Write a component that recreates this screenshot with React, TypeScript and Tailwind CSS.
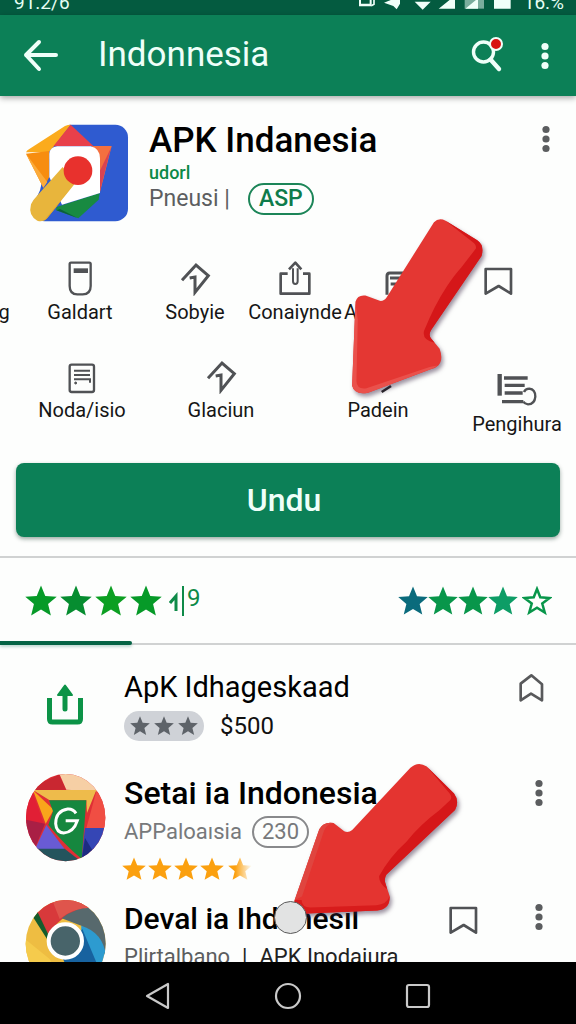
import React from 'react';
import clsx from 'clsx';

const STAR = 'M12 0.4 L15.2 8.2 L23.8 8.8 L17.3 14.3 L19.4 22.8 L12 18.4 L4.6 22.8 L6.7 14.3 L0.2 8.8 L8.8 8.2 Z';

function Star({ className, outline = false }: { className?: string; outline?: boolean }) {
  return (
    <svg viewBox="0 0 24 24" className={clsx('shrink-0', className)} aria-hidden="true">
      {outline ? (
        <path d="M12 2.4 L14.6 9 L22 9.6 L16.2 14 L18.2 21.2 L12 17.4 L5.8 21.2 L7.8 14 L2 9.6 L9.4 9 Z" fill="none" stroke="currentColor" strokeWidth="2" />
      ) : (
        <path d={STAR} fill="currentColor" />
      )}
    </svg>
  );
}

function Dots({ className, label }: { className?: string; label: string }) {
  return (
    <button type="button" aria-label={label} className={clsx('flex w-6 shrink-0 justify-center', className)}>
      <svg width="8" height="28" viewBox="0 0 8 28" fill="currentColor">
        <circle cx="4" cy="4.5" r="3.6" />
        <circle cx="4" cy="14" r="3.6" />
        <circle cx="4" cy="23.5" r="3.6" />
      </svg>
    </button>
  );
}

function BookmarkIcon() {
  return (
    <svg width="33" height="36" viewBox="581 180 99 108" fill="none" stroke="currentColor" strokeWidth="8" strokeLinejoin="round">
      <path d="M592 207 H668 V281 L631 258 L592 281 Z" />
    </svg>
  );
}

function CardIcon() {
  return (
    <svg width="26" height="36" viewBox="205 30 78 108" fill="none" stroke="currentColor" strokeWidth="7">
      <path d="M217 38 H272 Q276 38 276 42 V108 Q276 133 252 133 H236 Q213 133 213 108 V42 Q213 38 217 38 Z" />
      <path d="M225 62 H268" strokeWidth="14" />
    </svg>
  );
}

function TurnIcon() {
  return (
    <svg width="33" height="36" viewBox="534 30 99 108" fill="none" stroke="currentColor" strokeWidth="9">
      <path d="M543 91 L585 45 L622 77 L582 127 V81 L566 84" />
    </svg>
  );
}

function ShareIcon() {
  return (
    <svg width="34" height="36" viewBox="-21 178 102 108" fill="none" stroke="currentColor" strokeWidth="8" strokeLinejoin="round">
      <path d="M8 219 H-13 V279 H73 V219 H54" />
      <path d="M24 203 V242 Q24 250 31 250 Q38 250 38 242 V203" strokeWidth="6" />
      <path d="M12 206 L31 186 L49 206" />
    </svg>
  );
}

function ReportIcon() {
  return (
    <svg width="34" height="26" viewBox="292 222 102 78" fill="none" stroke="currentColor" strokeWidth="9">
      <path d="M301 296 V240 Q301 231 309 231 H350" />
      <path d="M310 246 H340 M312 264 H334" />
    </svg>
  );
}

function NoteIcon() {
  return (
    <svg width="30" height="36" viewBox="200 326 90 108" fill="none" stroke="currentColor" strokeWidth="7">
      <rect x="208" y="346" width="73" height="82" rx="6" />
      <path d="M221 364 H269 M221 377 H269 M221 390 H269 V400" strokeWidth="6" />
      <circle cx="226" cy="401" r="3" fill="currentColor" strokeWidth="3" />
    </svg>
  );
}

function SlashIcon() {
  return (
    <svg width="36" height="36" viewBox="213 474 108 108" fill="none" stroke="#222" strokeWidth="8">
      <path d="M278 576 L306 558" />
    </svg>
  );
}

function ListIcon() {
  return (
    <svg width="42" height="36" viewBox="630 516 126 108" fill="none" stroke="currentColor" strokeWidth="10">
      <path d="M641 522 V587" strokeWidth="13" />
      <path d="M654 534 H725 M656 556 H716 M656 579 H710 M648 605 H712" />
      <path d="M714 576 Q718 566 730 566 Q748 568 748 590 Q746 613 726 613 Q716 612 712 605" strokeWidth="7" />
    </svg>
  );
}

interface ActionProps {
  label: string;
  icon?: React.ReactNode;
  className?: string;
}

function Action({ label, icon, className }: ActionProps) {
  return (
    <button type="button" className={clsx('flex min-w-0 flex-col items-center', className)}>
      <span className="flex h-9 items-end text-[#505255]">{icon}</span>
      <span className="mt-1 h-6 text-[20px] leading-6 whitespace-nowrap text-[#161616]">{label}</span>
    </button>
  );
}

function AppLogo() {
  return (
    <svg width="104" height="100" viewBox="75 38 312 300" className="shrink-0" aria-hidden="true">
      <rect x="96" y="43" width="288" height="290" rx="38" fill="#2f5bd0" />
      <path d="M75 38 H212 L150 110 L120 240 L75 338 Z" fill="#fdfefd" />
      <path d="M78 126 Q80 120 88 116 L195 47 Q204 43 212 43 L162 108 L146 125 Z" fill="#fbab1d" />
      <path d="M78 130 L148 122 V200 L130 232 Z" fill="#f78d10" />
      <path d="M78 130 L142 215 L130 232 Z" fill="#fbab3a" />
      <path d="M212 43 L280 107 L160 108 Z" fill="#e8404a" />
      <path d="M276 107 H335 L300 245 Z" fill="#f4703f" />
      <path d="M333 112 L299 183 V246 Z" fill="#d84352" />
      <path d="M170 290 L299 248 L296 268 L235 324 L168 300 Z" fill="#188a41" />
      <path d="M170 300 L232 323 L180 296 Z" fill="#0c5f3b" />
      <path d="M172 108 H272 Q300 114 300 145 V248 L186 283 L148 200 V130 Q150 110 172 108 Z" fill="#fff" />
      <path d="M188 170 L226 218 L140 325 Q128 336 112 331 Q84 316 93 282 Q98 270 110 258 Z" fill="#e8b53c" />
      <path d="M226 218 L192 258 L166 294 L140 325 L130 333 Z" fill="#dfa52f" />
      <circle cx="234" cy="181" r="43" fill="#e8312d" />
    </svg>
  );
}

function PrismLogo() {
  return (
    <svg width="81" height="89" viewBox="76 40 243 267" aria-hidden="true">
      <clipPath id="prism"><ellipse cx="198" cy="174" rx="119" ry="131" /></clipPath>
      <g clipPath="url(#prism)">
        <rect x="76" y="40" width="243" height="267" fill="#df2f35" />
        <path d="M76 92 L178 45 L200 90 Z" fill="#c92731" />
        <path d="M178 40 H319 V110 L290 95 L200 90 Z" fill="#f6cfa5" />
        <path d="M100 91 H290 L262 160 L260 122 H150 Z" fill="#eebb4b" />
        <path d="M100 92 L162 150 L138 192 Z" fill="#f9a51b" />
        <path d="M76 100 L98 96 L135 200 L76 190 Z" fill="#e11f35" />
        <path d="M76 180 L136 192 L106 266 H76 Z" fill="#a91f45" />
        <path d="M290 95 L319 120 V206 H260 Z" fill="#f04e43" />
        <path d="M140 196 L195 268 H106 Z" fill="#695bd4" />
        <path d="M256 205 H319 V240 L246 295 Z" fill="#3546b5" />
        <path d="M256 235 L282 278 L246 300 Z" fill="#1d2c82" />
        <path d="M100 267 H195 L246 307 H100 Z" fill="#24545d" />
        <path d="M148 122 H260 L246 297 Q205 266 146 196 L160 155 Z" fill="#16873f" />
      </g>
      <path d="M229 161 Q220 147 204 148 Q168 154 168 192 Q170 219 192 220 Q222 218 233 183 H198" fill="none" stroke="#fff" strokeWidth="9" />
    </svg>
  );
}

function RingLogo() {
  return (
    <svg width="81" height="89" viewBox="76 420 243 267" aria-hidden="true">
      <clipPath id="ring"><ellipse cx="198" cy="554" rx="120" ry="131" /></clipPath>
      <g clipPath="url(#ring)">
        <rect x="76" y="420" width="243" height="267" fill="#eebd42" />
        <path d="M76 540 L150 600 L198 687 H76 Z" fill="#f5cb4c" />
        <path d="M110 460 Q190 390 275 446 Q200 450 145 525 Z" fill="#d8393b" />
        <path d="M160 430 Q220 410 275 446 Q215 448 180 480 Z" fill="#df554c" />
        <path d="M186 478 Q225 445 275 446 L319 460 V590 L245 500 Z" fill="#57696d" />
        <path d="M245 500 Q310 520 319 590 V687 H240 Z" fill="#2d9bd0" />
        <path d="M248 510 L290 610 L230 687 L190 600 Z" fill="#17629f" />
        <path d="M100 474 L114 460 L150 535 L142 540 Z" fill="#155c2d" />
        <circle cx="197" cy="546" r="50" fill="#48646a" stroke="#fff" strokeWidth="12" />
      </g>
    </svg>
  );
}

const NAV_STROKE = '#c9c9c9';

export default function App() {
  return (
    <div className="flex h-screen flex-col overflow-hidden bg-[#fdfefd] font-[Roboto,sans-serif] text-black">
      <div className="flex h-[15px] shrink-0 items-end justify-between overflow-hidden bg-[#045b40] pr-3 pb-0.5 pl-3.5 text-[#e6fff5]">
        <span className="h-5 text-[19px] leading-5">91.2/6</span>
        <div className="flex h-5 items-end gap-3">
          <svg width="154" height="14" viewBox="192 -6 462 42" fill="#f0fff9" aria-hidden="true">
            <path d="M195 -18 H233 V16 H195 Z M201 -10 V8 H227 V-10 Z" fillRule="evenodd" />
            <path d="M240 -5 V10 L232 14" stroke="#f0fff9" strokeWidth="5" fill="none" />
            <path d="M270 5 L318 -14 V8 L308 25 L298 15 Z M362 2 H410 L386 26 Z M434 23 L483 -16 V23 Z" />
            <path d="M512 -16 H570 V23 H512 Z" opacity="0.5" />
            <path d="M514 23 L552 -8 V23 Z M600 -18 H650 V23 H600 Z" />
          </svg>
          <span className="text-[19px] leading-5">16.%</span>
        </div>
      </div>

      <header className="relative z-10 flex h-[81px] shrink-0 items-center bg-[#0c8057] pr-[19px] pl-5 text-[#effff9] shadow-[0_2px_6px_rgba(0,0,0,0.35)]">
        <button type="button" aria-label="Back" className="mr-9">
          <svg width="42" height="34" viewBox="0 0 42 34" fill="none" stroke="currentColor" strokeWidth="4" strokeLinecap="round" strokeLinejoin="round">
            <path d="M36 16 H6 M19 3 L6 16 L19 30" />
          </svg>
        </button>
        <h1 className="flex-1 pb-0.5 text-[35px] leading-10">Indonnesia</h1>
        <button type="button" aria-label="Search" className="mr-7 pb-1">
          <svg width="34" height="38" viewBox="0 0 34 38" fill="none" stroke="currentColor">
            <circle cx="12.5" cy="17" r="10" strokeWidth="3.4" />
            <path d="M19.5 24.5 L28 34" strokeWidth="4.4" strokeLinecap="round" />
            <circle cx="25" cy="9" r="6" fill="#d81212" strokeWidth="2" />
          </svg>
        </button>
        <Dots label="More options" />
      </header>

      <main className="min-h-0 flex-1 overflow-hidden">
        <section className="flex items-start pt-[27px] pr-[18px] pl-[25px]">
          <AppLogo />
          <div className="ml-5 min-w-0 flex-1">
            <h2 className="h-10 text-[35px] leading-9 font-medium whitespace-nowrap">APK Indanesia</h2>
            <p className="h-5 text-[18px] leading-5 font-medium text-[#0c8a48]">udorl</p>
            <div className="flex h-8 items-center text-[23px] leading-8 text-[#5c5e60]">
              <span>Pneusi |</span>
              <span className="ml-[18px] rounded-full border-2 border-[#1c8558] px-[9px] text-[23px] leading-7 font-medium text-[#0e7b4b]">ASP</span>
            </div>
          </div>
          <Dots label="App options" className="mt-0.5 text-[#5b5d5f]" />
        </section>

        <section className="relative pt-[37px]">
          <div className="grid grid-cols-[22fr_116fr_114fr_90fr_106fr_100fr_28fr] overflow-hidden">
            <Action label="g" className="-ml-3.5" />
            <Action label="Galdart" icon={<CardIcon />} />
            <Action label="Sobyie" icon={<TurnIcon />} />
            <Action label="Conaiynde" icon={<ShareIcon />} className="-ml-1" />
            <div className="flex flex-col text-[#505255]">
              <span className="flex h-9 items-end justify-center pl-3"><ReportIcon /></span>
              <span className="mt-1 pl-0.5 text-[20px] leading-6 text-[#161616]">A</span>
            </div>
            <Action label="" icon={<BookmarkIcon />} />
          </div>
          <div className="mt-[34px] grid grid-cols-[140fr_138fr_176fr_102fr] pr-2 pl-3">
            <Action label="Noda/isio" icon={<NoteIcon />} />
            <Action label="Glaciun" icon={<TurnIcon />} />
            <Action label="Padein" icon={<SlashIcon />} />
            <Action label="Pengihura" icon={<ListIcon />} className="mt-3.5" />
          </div>

          <svg width="140" height="183" viewBox="180 48 420 550" className="absolute top-[-7px] left-[348px] overflow-visible drop-shadow-[2px_3px_2px_rgba(60,40,70,0.5)]" aria-hidden="true">
            <path d="M438 67 Q452 52 473 62 L568 121 Q590 136 581 168 L430 390 Q420 405 430 417 L455 447 Q467 480 451 497 Q444 504 430 508 L240 579 Q200 587 192 558 L202 306 Q208 284 232 287 L275 303 Q287 305 296 292 Z" fill="#e43733" />
            <path d="M473 62 L568 121 Q590 136 581 168 L430 390 Q420 405 430 417 L440 429 Q402 420 408 394 Q440 315 478 258 Q500 225 520 203 L564 146 Q566 134 554 126 Z" fill="#d51719" />
            <path d="M202 310 L192 558 Q200 587 240 579 L430 508 Q440 504 448 497 L425 502 L235 566 Q206 570 205 545 L209 360 Z" fill="#ea514c" />
          </svg>
        </section>

        <div className="px-4 pt-[27px] pb-[19px]">
          <button type="button" className="h-[74px] w-full rounded-lg bg-[#0c8057] text-[32px] leading-10 font-medium text-[#effff9] shadow-[0_2px_4px_rgba(0,40,25,0.4)]">
            <span className="-ml-2">Undu</span>
          </button>
        </div>

        <section className="relative flex h-[89px] items-center justify-between border-y-2 border-[#d0d2d2] pr-6 pl-[25px]">
          <div className="flex items-center gap-[3px] text-[#069a28]">
            <Star className="size-8" />
            <Star className="size-8 text-[#068d30]" />
            <Star className="size-8 text-[#0c9f22]" />
            <Star className="size-8" />
            <span className="ml-1 flex items-center text-[24px] leading-7 text-[#0e8a48]">
              <svg width="10" height="22" viewBox="0 0 10 22" fill="none" stroke="currentColor" strokeWidth="3">
                <path d="M1 13 L7 6 V21" />
              </svg>
              <span className="mx-[3px] h-[30px] w-0.5 bg-[#0e8a48]" />
              <span className="pb-1.5">9</span>
            </span>
          </div>
          <div className="flex items-center text-[#08964a]">
            <Star className="size-[30px] text-[#0a6b7c]" />
            <Star className="size-[30px]" />
            <Star className="size-[30px]" />
            <Star className="size-[30px] text-[#0d9d66]" />
            <Star className="ml-1 size-[30px]" outline />
          </div>
          <span className="absolute -bottom-0.5 left-0 h-1 w-[23%] rounded-r bg-[#046344] shadow-[0_2px_3px_rgba(0,100,80,0.25)]" />
        </section>

        <ul className="relative pt-6">
          <li className="flex h-[72px] items-start pr-[30px]">
            <svg width="38" height="42" viewBox="0 0 38 42" className="mt-3.5 mr-10 ml-[46px] shrink-0" fill="none" stroke="#0c9347" strokeWidth="5" strokeLinejoin="round" aria-hidden="true">
              <path d="M3.5 15 V36 Q3.5 39 6.5 39 H31.5 Q34.5 39 34.5 36 V15" />
              <path d="M19 26 V6" strokeLinecap="round" />
              <path d="M12 12 L19 2.5 L26 12 Z" fill="#0c9347" strokeWidth="2" />
            </svg>
            <div className="min-w-0 flex-1">
              <h3 className="text-[29px] leading-9 whitespace-nowrap">ApK Idhageskaad</h3>
              <div className="mt-1.5 flex items-center">
                <span className="flex h-[30px] items-center gap-1 rounded-full bg-[#cfd2d7] px-1.5 text-[#5e6369]">
                  <Star className="size-5" />
                  <Star className="size-5" />
                  <Star className="size-5" />
                </span>
                <span className="ml-4 text-[24px] leading-7 text-[#111]">$500</span>
              </div>
            </div>
            <button type="button" aria-label="Save" className="mt-1 text-[#58595b]">
              <svg width="28" height="30" viewBox="693 366 84 90" fill="none" stroke="currentColor" strokeWidth="8" strokeLinejoin="round">
                <path d="M701 398 L733 373 L765 400 V448 L732 428 L701 448 Z" />
              </svg>
            </button>
          </li>

          <li className="mt-8 flex items-start pr-[25px] pl-[25px]">
            <PrismLogo />
            <div className="ml-[18px] min-w-0 flex-1 pt-0.5">
              <h3 className="text-[32px] leading-9 font-medium whitespace-nowrap">Setai ia Indonesia</h3>
              <div className="mt-1.5 flex h-[30px] items-center text-[22px] leading-7 text-[#77797b]">
                <span>APPaloaısia</span>
                <span className="ml-2.5 rounded-full border-2 border-[#88898b] px-2 leading-7">230</span>
              </div>
              <div className="mt-2.5 flex gap-0.5 text-[#fba00f]">
                <Star className="-ml-0.5 size-6" />
                <Star className="size-6" />
                <Star className="size-6" />
                <Star className="size-6" />
                <Star className="ml-0.5 size-6 mask-r-from-30%" />
              </div>
            </div>
            <Dots label="Options for Setai ia Indonesia" className="mt-1.5 text-[#5b5d5f]" />
          </li>

          <li className="mt-[18px] flex items-start pr-[25px] pl-[25px]">
            <RingLogo />
            <div className="ml-[18px] min-w-0 flex-1 pt-0.5">
              <h3 className="text-[30px] leading-9 font-medium whitespace-nowrap">Deval ia Ihdonesil</h3>
              <p className="mt-1.5 text-[22px] leading-7 whitespace-nowrap text-[#222]">
                <span className="text-[#5c5e60]">Plirtalbano</span>
                <span className="mx-3">|</span>
                <span>APK Inodaiura</span>
              </p>
            </div>
            <button type="button" aria-label="Save Deval ia Ihdonesil" className="mr-[47px] text-[#505255]">
              <BookmarkIcon />
            </button>
            <Dots label="Options for Deval ia Ihdonesil" className="mt-1 text-[#5b5d5f]" />
          </li>

          <svg width="173" height="160" viewBox="150 30 520 480" className="absolute top-[115px] left-[290px] overflow-visible drop-shadow-[2px_3px_2px_rgba(60,40,70,0.5)]" aria-hidden="true">
            <path d="M512 53 Q535 32 561 49 L643 130 Q660 153 646 180 L440 374 Q431 388 438 404 L450 440 Q451 478 412 482 L200 491 Q158 492 164 450 L238 238 Q250 214 281 219 L313 244 Q325 250 337 240 Z" fill="#e43430" />
            <path d="M561 49 L643 130 Q660 153 646 180 L440 374 Q431 388 438 404 L442 418 Q416 400 418 378 Q450 320 500 275 Q540 225 600 180 L632 150 Q638 140 630 130 Z" fill="#d51719" />
            <path d="M164 450 Q158 492 200 491 L412 482 Q450 478 449 440 Q440 464 410 466 L212 473 Q185 472 185 450 Z" fill="#d81c1c" />
            <path d="M164 450 L238 238 Q250 214 281 219 Q258 224 252 243 L186 440 Z" fill="#e0453f" />
          </svg>
          <span className="absolute top-[256px] left-[274px] size-[33px] rounded-full border border-[#5a5a5a] bg-[#e2e3e3]" />
        </ul>
      </main>

      <nav className="relative z-10 flex h-[62px] shrink-0 items-center justify-center gap-[102px] bg-black pt-1.5">
        <button type="button" aria-label="Back">
          <svg width="28" height="28" viewBox="0 0 28 28" fill="none" stroke={NAV_STROKE} strokeWidth="2.2" strokeLinejoin="round">
            <path d="M3 14 L24 2 V26 Z" />
          </svg>
        </button>
        <button type="button" aria-label="Home">
          <svg width="28" height="28" viewBox="0 0 28 28" fill="none" stroke={NAV_STROKE} strokeWidth="2.2">
            <circle cx="14" cy="14" r="12" />
          </svg>
        </button>
        <button type="button" aria-label="Recent apps">
          <svg width="28" height="28" viewBox="0 0 28 28" fill="none" stroke={NAV_STROKE} strokeWidth="2.2">
            <rect x="3" y="3" width="22" height="22" rx="2" />
          </svg>
        </button>
      </nav>
    </div>
  );
}
